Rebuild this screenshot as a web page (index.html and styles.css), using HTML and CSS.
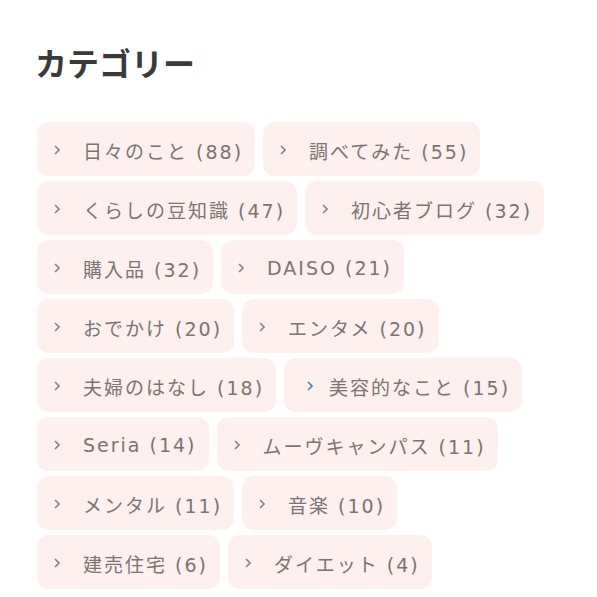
FILE: index.html
```html
<!DOCTYPE html>
<html lang="ja">
<head>
<meta charset="utf-8">
<title>カテゴリー</title>
<link rel="stylesheet" href="styles.css">
</head>
<body>
<section class="widget">
  <h2 class="widget-title">カテゴリー</h2>
  <ul class="cats">
    <li class="cat"><svg class="chev" viewBox="0 0 6 10"><path d="M1 1l4 4-4 4"/></svg><span>日々のこと (88)</span></li>
    <li class="cat"><svg class="chev" viewBox="0 0 6 10"><path d="M1 1l4 4-4 4"/></svg><span>調べてみた (55)</span></li>
    <li class="cat"><svg class="chev" viewBox="0 0 6 10"><path d="M1 1l4 4-4 4"/></svg><span>くらしの豆知識 (47)</span></li>
    <li class="cat"><svg class="chev" viewBox="0 0 6 10"><path d="M1 1l4 4-4 4"/></svg><span>初心者ブログ (32)</span></li>
    <li class="cat"><svg class="chev" viewBox="0 0 6 10"><path d="M1 1l4 4-4 4"/></svg><span>購入品 (32)</span></li>
    <li class="cat"><svg class="chev" viewBox="0 0 6 10"><path d="M1 1l4 4-4 4"/></svg><span>DAISO (21)</span></li>
    <li class="cat"><svg class="chev" viewBox="0 0 6 10"><path d="M1 1l4 4-4 4"/></svg><span>おでかけ (20)</span></li>
    <li class="cat"><svg class="chev" viewBox="0 0 6 10"><path d="M1 1l4 4-4 4"/></svg><span>エンタメ (20)</span></li>
    <li class="cat"><svg class="chev" viewBox="0 0 6 10"><path d="M1 1l4 4-4 4"/></svg><span>夫婦のはなし (18)</span></li>
    <li class="cat active"><svg class="chev" viewBox="0 0 6 10"><path d="M1 1l4 4-4 4"/></svg><span>美容的なこと (15)</span></li>
    <li class="cat"><svg class="chev" viewBox="0 0 6 10"><path d="M1 1l4 4-4 4"/></svg><span>Seria (14)</span></li>
    <li class="cat"><svg class="chev" viewBox="0 0 6 10"><path d="M1 1l4 4-4 4"/></svg><span>ムーヴキャンパス (11)</span></li>
    <li class="cat"><svg class="chev" viewBox="0 0 6 10"><path d="M1 1l4 4-4 4"/></svg><span>メンタル (11)</span></li>
    <li class="cat"><svg class="chev" viewBox="0 0 6 10"><path d="M1 1l4 4-4 4"/></svg><span>音楽 (10)</span></li>
    <li class="cat"><svg class="chev" viewBox="0 0 6 10"><path d="M1 1l4 4-4 4"/></svg><span>建売住宅 (6)</span></li>
    <li class="cat"><svg class="chev" viewBox="0 0 6 10"><path d="M1 1l4 4-4 4"/></svg><span>ダイエット (4)</span></li>
  </ul>
</section>
</body>
</html>
```

FILE: styles.css
```css
html, body {
  margin: 0;
  padding: 0;
  background: #ffffff;
}
body {
  font-family: "DejaVu Sans", "Noto Sans CJK JP", sans-serif;
}
.widget {
  padding: 36px 37px 0 37px;
  width: 523px;
}
.widget-title {
  margin: 0 0 34px -2px;
  font-family: "Noto Sans CJK JP", sans-serif;
  font-size: 32px;
  font-weight: 700;
  line-height: 52px;
  color: #3a3a3a;
  letter-spacing: 0;
}
.cats {
  list-style: none;
  margin: 0;
  padding: 0;
  display: flex;
  flex-wrap: wrap;
  gap: 5px 8px;
}
.cat {
  display: flex;
  align-items: center;
  height: 54px;
  padding: 2px 12px 0 17px;
  box-sizing: border-box;
  border-radius: 12px;
  background: #fdf0ef;
  color: #7b7470;
  font-size: 19px;
  letter-spacing: 2px;
}
.chev {
  width: 6px;
  height: 10px;
  margin-right: 23px;
  flex: none;
  fill: none;
  stroke: #8b8380;
  stroke-width: 1.6;
}
.active {
  padding-left: 23px;
}
.active .chev {
  stroke: #3b8aa5;
  margin-right: 16px;
}
```
